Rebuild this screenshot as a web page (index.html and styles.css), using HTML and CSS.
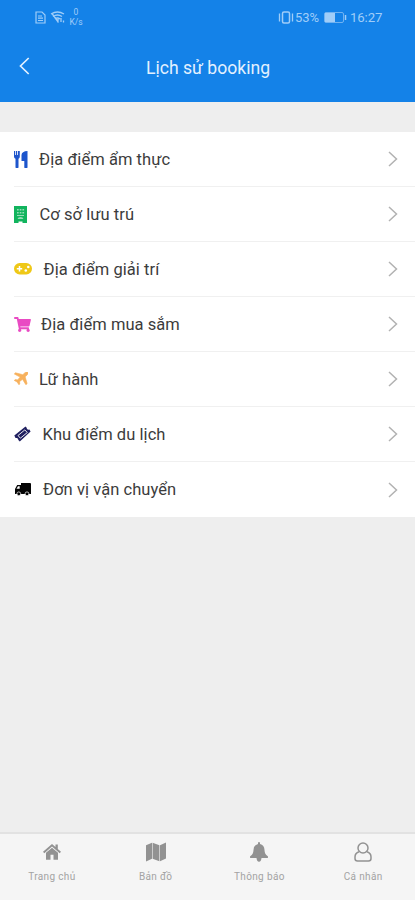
FILE: index.html
```html
<!DOCTYPE html>
<html lang="vi">
<head>
<meta charset="utf-8">
<title>Lịch sử booking</title>
<link rel="stylesheet" href="styles.css">
</head>
<body>
<header class="header">
  <div class="status">
    <svg class="sim" width="11" height="13" viewBox="0 0 11 13"><path d="M1 1h6l3 3v8H1zM3 5h4M3 7.200h5M3 9.500h5" fill="none" stroke="currentColor" stroke-width="1.200"/></svg>
    <svg class="wifi" width="16" height="13" viewBox="0 0 16 13"><path d="M1 3q6.500-4 13 0M3 5.500q4.500-3 9 0M5 8q2.500-2 5 0M2 2.500l6.500 9M8 8v3.500M11 7v4M13.500 9.500v2" fill="none" stroke="currentColor" stroke-width="1.300"/></svg>
    <div class="speed"><span>0</span><span>K/s</span></div>
    <div class="status-right">
      <svg width="16" height="13" viewBox="0 0 16 13"><rect x="4.500" y="1" width="7" height="11" rx="1.500" fill="none" stroke="currentColor" stroke-width="1.500"/><path d="M1.500 2.500v8M14.500 2.500v8" stroke="currentColor" stroke-width="1.300"/></svg>
      <span class="percent">53%</span>
      <svg class="battery" width="23" height="11" viewBox="0 0 23 11"><rect x=".5" y=".5" width="19" height="10" rx="1.500" fill="none" stroke="currentColor" opacity=".65"/><path d="M1 1h10v9H1z" fill="currentColor"/><path d="M21.500 3v5" stroke="currentColor" stroke-width="1.500"/></svg>
      <span class="time">16:27</span>
    </div>
  </div>
  <div class="titlebar">
    <svg class="back" width="12" height="18" viewBox="0 0 12 18"><path d="M10.700 1L2.500 9l8.200 8" fill="none" stroke="currentColor" stroke-width="1.700"/></svg>
    <h1>Lịch sử booking</h1>
  </div>
</header>
<main class="list">
  <div class="row food">
    <svg class="icon" viewBox="0 0 14 17"><path d="M0 0h1.200v4h.8V0h1.200v4H4V0h1.800v5.500Q5.800 7.300 4.500 7.800V16a1 1 0 0 1-3 0V7.800Q0 7.300 0 5.500z"/><path d="M13.500 0v16a1.300 1.300 0 0 1-3.200 0v-6H7.500V4Q7.800.3 13.500 0z"/></svg>
    <span class="label">Địa điểm ẩm thực</span><svg class="chevron" viewBox="0 0 10 16"><path d="M1 1l7.500 7L1 15"/></svg>
  </div>
  <div class="row hotel">
    <svg class="icon" viewBox="0 0 13 17"><path d="M0 0h13v17H8.500v-1.500h-4V17H0z"/><path class="hole" opacity=".55" d="M3 3h1.700v1.500H3zm2.700 0h1.700v1.500H5.700zm2.700 0h1.700v1.500H8.400zM3 6h1.700v1.500H3zm2.700 0h1.700v1.500H5.700zm2.700 0h1.700v1.500H8.400zM3 9h7v1H3zM3.500 13Q4 11 6.500 11T9.500 13z"/></svg>
    <span class="label">Cơ sở lưu trú</span><svg class="chevron" viewBox="0 0 10 16"><path d="M1 1l7.500 7L1 15"/></svg>
  </div>
  <div class="row games">
    <svg class="icon" viewBox="0 0 18 12"><rect width="18" height="11.500" rx="5.700"/><path d="M2.800 5.800h5.400M5.500 3.100v5.400" fill="none" stroke="#fff" stroke-width="1.500"/><circle class="hole" cx="14.300" cy="4" r="1.300"/><circle class="hole" cx="11.800" cy="7.500" r="1.300"/></svg>
    <span class="label">Địa điểm giải trí</span><svg class="chevron" viewBox="0 0 10 16"><path d="M1 1l7.500 7L1 15"/></svg>
  </div>
  <div class="row shop">
    <svg class="icon" viewBox="0 0 576 512"><path d="M528.100 301.300l47.300-208C578.800 78.300 567.400 64 552 64H159.200l-9.200-44.800C147.800 8 137.900 0 126.500 0H24C10.700 0 0 10.700 0 24v16c0 13.300 10.700 24 24 24h69.900l70.200 343.400C147.300 417.100 136 435.200 136 456c0 30.900 25.100 56 56 56s56-25.100 56-56c0-15.700-6.400-29.800-16.800-40h209.600C430.400 426.200 424 440.300 424 456c0 30.900 25.100 56 56 56s56-25.100 56-56c0-22.200-12.900-41.300-31.600-50.400l5.500-24.300c3.400-15-8-29.300-23.400-29.300H218.100l-6.500-32h293.100c11.200 0 20.900-7.800 23.400-18.700z"/></svg>
    <span class="label">Địa điểm mua sắm</span><svg class="chevron" viewBox="0 0 10 16"><path d="M1 1l7.500 7L1 15"/></svg>
  </div>
  <div class="row travel">
    <svg class="icon" viewBox="0 0 14 14" preserveAspectRatio="none"><path d="M13.700.3C13-.3 11.700 0 10.700 1L8.800 2.900 1.500.9.300 2.100l5.900 3.400-2.600 3L1.200 8.200.3 9.100l2.900 1.700 1.700 2.900.9-.9-.3-2.400 3-2.600 3.400 5.900 1.200-1.200-2-7.300L13 3.300c1-1 1.300-2.300.7-3z" stroke="currentColor" stroke-width=".7"/></svg>
    <span class="label">Lữ hành</span><svg class="chevron" viewBox="0 0 10 16"><path d="M1 1l7.500 7L1 15"/></svg>
  </div>
  <div class="row resort">
    <svg class="icon" viewBox="0 0 17 16"><path d="M.3 9.500L11.500.5l1.200 1.300q-.2 1.700 1.500 2l1.200-.2 1.200 1.800L5.800 15.500l-1.500-1.600q.2-1.700-1.500-2l-1.300.1z"/><path d="M4 9.500l6.800-5.600 2.500 2.600-6.900 5.700z" fill="none" stroke="#fff" stroke-width=".9"/></svg>
    <span class="label">Khu điểm du lịch</span><svg class="chevron" viewBox="0 0 10 16"><path d="M1 1l7.500 7L1 15"/></svg>
  </div>
  <div class="row transport">
    <svg class="icon" viewBox="0 0 16 13"><path d="M6 0h9q1 0 1 1v10H0V6l2.200-4H6z"/><path class="hole" d="M1.500 5.800L3 3.300h1.700v2.500z"/><circle cx="3.800" cy="10.800" r="1.900" stroke="#fff" stroke-width=".7"/><circle cx="12" cy="10.800" r="1.900" stroke="#fff" stroke-width=".7"/></svg>
    <span class="label">Đơn vị vận chuyển</span><svg class="chevron" viewBox="0 0 10 16"><path d="M1 1l7.500 7L1 15"/></svg>
  </div>
</main>
<nav class="tabs">
  <div class="tab"><svg width="18" height="20" viewBox="0 0 18 20"><path d="M0 9.800L9 2l3.500 3V2.600h2.300v4.300L18 9.800l-1.300 1.400L9 4.600 1.300 11.200z"/><path d="M3 10.800l6-5.100 6 5.100v7h-4.500v-5h-3v5H3z"/></svg><span>Trang chủ</span></div>
  <div class="tab"><svg width="20" height="20" viewBox="0 0 20 20"><path d="M0 3.300L6 .8v16L0 19.500zM6.600.8l6.800 2.500v16l-6.800-2.500zM14 3.300L20 .5v16l-6 2.800z"/></svg><span>Bản đồ</span></div>
  <div class="tab"><svg width="18" height="20" viewBox="0 0 18 20"><path d="M8 1a1 1 0 0 1 2 0v1q4.300 1 4.500 6 .2 4.500 3 6 .8.400.3 2H.2q-.5-1.600.3-2 2.800-1.500 3-6Q3.700 3 8 2zM6.500 16h5q-.3 3.700-2.500 3.700T6.500 16z"/></svg><span>Thông báo</span></div>
  <div class="tab"><svg width="18" height="20" viewBox="0 0 18 20"><g fill="none" stroke="currentColor" stroke-width="1.500"><circle cx="9" cy="6" r="5"/><path d="M5 9.800Q1 11 1 15v1.500Q1 19 3.500 19h11q2.500 0 2.500-2.500V15q0-4-4-5.200"/></g></svg><span>Cá nhân</span></div>
</nav>
</body>
</html>
```
FILE: styles.css
```css
* { box-sizing: border-box; }
body {
  margin: 0;
  height: 900px;
  display: flex;
  flex-direction: column;
  overflow: hidden;
  background: #eee;
  font-family: Roboto, "Liberation Sans", sans-serif;
}
svg { display: block; flex: none; }
.header {
  height: 102px;
  margin-bottom: 30px;
  background: #1482e8;
  color: #e3f1ff;
  flex: none;
}
.status {
  height: 34px;
  padding: 0 32px 0 35px;
  display: flex;
  align-items: center;
  color: #a0cdf8;
}
.wifi { margin-left: 4px; }
.speed {
  margin-left: 3px;
  width: 14px;
  display: flex;
  flex-direction: column;
  text-align: center;
  font-size: 8.5px;
  line-height: 10px;
}
.status-right { margin-left: auto; display: flex; align-items: center; }
.percent { margin-left: 1px; width: 25px; font-size: 13px; letter-spacing: -.1px; }
.battery { margin-left: 4px; }
.time { margin-left: 3px; font-size: 13.2px; width: 33px; letter-spacing: -.1px; }
.titlebar {
  height: 64px;
  padding-left: 18px;
  display: flex;
  align-items: center;
}
h1 {
  margin: 4px 29px 0 0;
  flex: 1;
  text-align: center;
  font-size: 17.6px;
  font-weight: 400;
}
.list { background: #fff; flex: none; }
.row {
  height: 55px;
  margin-left: 14px;
  padding-right: 17px;
  display: flex;
  align-items: center;
  border-bottom: 1px solid #f0f0f0;
}
.row:last-child { border-bottom: 0; }
.label {
  flex: 1;
  padding-top: 1px;
  color: #3c3c3c;
  font-size: 16.5px;
  line-height: 22px;
  letter-spacing: .06px;
}
.transport .label { padding-top: 0; }
.icon { fill: currentColor; }
.hole { fill: #fff; }
.chevron { width: 10px; height: 16px; fill: none; stroke: #b2b2b2; stroke-width: 1.5; }
.food .icon { width: 14px; height: 17px; margin-right: 11px; color: #1d55cc; }
.hotel .icon { width: 13px; height: 17px; margin-right: 12.5px; color: #12b45e; }
.games .icon { width: 18px; height: 12px; margin-right: 11.5px; color: #efc817; }
.shop .icon { width: 17px; height: 15px; margin-right: 10px; color: #e94bc3; }
.travel .icon { width: 14px; height: 13px; margin: -1px 11px 0 0; color: #f7b15d; }
.resort .icon { width: 17px; height: 16px; margin-right: 11.5px; color: #202060; }
.transport .icon { width: 16px; height: 13px; margin: 0 12px 0 1px; color: #050505; }
.tabs {
  height: 68px;
  margin-top: auto;
  display: flex;
  background: #f5f5f5;
  border-top: 2px solid #e2e2e2;
}
.tab {
  flex: 1;
  padding-top: 8px;
  display: flex;
  flex-direction: column;
  align-items: center;
  color: #929292;
  font-size: 10px;
  line-height: 12px;
  letter-spacing: .35px;
}
.tab svg { fill: currentColor; margin-bottom: 9px; }
.tab span { color: #a3a3a3; }
```
